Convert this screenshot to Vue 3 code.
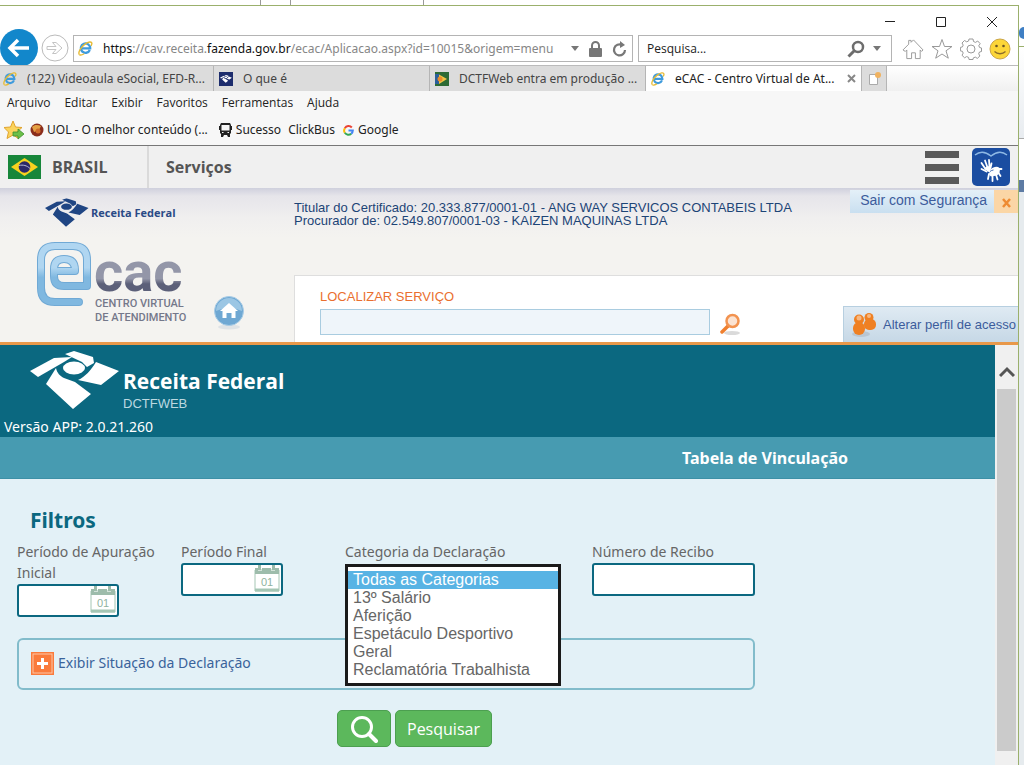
<script setup>
import { ref } from 'vue'

const search = ref('')
const service = ref('')
const start = ref('')
const end = ref('')
const receipt = ref('')
const category = ref(['Todas as Categorias'])

const tabs = [
  { title: '(122) Videoaula eSocial, EFD-R...', icon: 'ie' },
  { title: 'O que é', icon: 'rf' },
  { title: 'DCTFWeb entra em produção ...', icon: 'flag' },
  { title: 'eCAC - Centro Virtual de At...', icon: 'ie', active: true },
]
const menus = ['Arquivo', 'Editar', 'Exibir', 'Favoritos', 'Ferramentas', 'Ajuda']
const categories = [
  'Todas as Categorias',
  '13º Salário',
  'Aferição',
  'Espetáculo Desportivo',
  'Geral',
  'Reclamatória Trabalhista',
]
</script>

<template>
  <svg class="defs" aria-hidden="true">
    <symbol id="ie" viewBox="0 0 16 16">
      <path d="M12.6 9.6A5 5 0 1 1 13 7.8H4.2" fill="none" stroke="#3f9bdc" stroke-width="2.5" />
      <path d="M1.6 14.6C-.5 12.5 3 6.5 7.5 3.3 11 .8 14.5.3 14.8 2.3c.1 1-.4 2-.9 2.900" fill="none" stroke="#e6bb35" stroke-width="1.5" />
      <path d="M1.6 14.6c1.2.9 3.4 0 5-1" fill="none" stroke="#e6bb35" stroke-width="1.5" />
    </symbol>
    <symbol id="rfmark" viewBox="0 0 90 60">
      <path d="M0 20 24 7l18-1-8 5L8 26Z" />
      <path d="M35 3 44 0l19 6 1 6-7 4-5-5Z" />
      <ellipse cx="44" cy="17" rx="11" ry="6.5" />
      <path d="M26 17c1 5 4 8 8 10l11 4 16 12-18 15L16 33Z" />
      <path d="M48 29c7-3 13-10 18-18l23 9-18 14Z" />
    </symbol>
    <symbol id="rf" viewBox="0 0 14 14">
      <rect width="14" height="14" fill="#1d2d6d" />
      <svg x="1" y="3" width="12" height="8" viewBox="0 0 90 60" fill="#fff"><use href="#rfmark" /></svg>
    </symbol>
    <symbol id="flag" viewBox="0 0 14 14">
      <rect width="14" height="14" fill="#2d6b35" />
      <path d="M0 2h4l4 5-4 5H0z" fill="#2b5f9b" />
      <path d="M4 2.5 12 7l-8 5z" fill="#f2c544" />
      <circle cx="5" cy="7" r="2.5" fill="#e98c2d" />
    </symbol>
    <symbol id="lens" viewBox="0 0 18 18">
      <circle cx="11" cy="7" r="5" fill="none" stroke="#6d6d6d" stroke-width="2.5" />
      <path d="m7.500 10.500-6 6" stroke="#6d6d6d" stroke-width="3" />
    </symbol>
    <symbol id="cal" viewBox="0 0 26 27">
      <path d="M1 5h24v21H1z" fill="#fff" stroke="#a5c6b4" />
      <path d="M1 25h24" stroke="#a5c6b4" stroke-width="3" />
      <path d="M1 3h3v3h4V3h9v3h4V3h4v6H1z" fill="#9dbcab" />
      <path d="M5.500 0v5M19.500 0v5" stroke="#9dbcab" stroke-width="3" />
      <text x="13" y="21" text-anchor="middle" class="cal-day">01</text>
    </symbol>
  </svg>

  <div class="desktop">
    <div class="behind-top"><i class="t1"></i><i class="t2"></i><i class="t3"></i></div>
    <div class="stage">
      <main class="window">
        <div class="titlebar">
          <button aria-label="Minimizar"><svg width="12" height="12"><path d="M1 5.500h10" stroke="#222" /></svg></button>
          <button aria-label="Maximizar"><svg width="12" height="12"><path d="M1.500 1.500h9v9h-9z" fill="none" stroke="#222" /></svg></button>
          <button aria-label="Fechar"><svg width="12" height="12"><path d="m1 1 10 10M11 1 1 11" stroke="#222" /></svg></button>
        </div>

        <div class="navbar">
          <button class="back" aria-label="Voltar">
            <svg width="38" height="38" viewBox="0 0 38 38">
              <circle cx="19" cy="19" r="19" fill="#1287cb" />
              <path d="M29 19H10M18 11l-8 8 8 8" fill="none" stroke="#fff" stroke-width="3.500" />
            </svg>
          </button>
          <button class="forward" aria-label="Avançar">
            <svg width="28" height="28" viewBox="0 0 28 28">
              <circle cx="14" cy="14" r="13" fill="#fff" stroke="#bbb" />
              <path d="M6 12.500h9l-3.500-4h3.500l6 5.500-6 5.500h-3.500l3.500-4H6z" fill="none" stroke="#c4c4c4" />
            </svg>
          </button>
          <div class="address">
            <svg width="15" height="15"><use href="#ie" /></svg>
            <div class="url" role="textbox" contenteditable="true" aria-label="Endereço" spellcheck="false"><b>https</b>://cav.receita.<b>fazenda.gov.br</b>/ecac/Aplicacao.aspx?id=10015&amp;origem=menu</div>
            <svg width="8" height="5"><path d="M0 0h8L4 5z" fill="#777" /></svg>
            <svg width="13" height="16" viewBox="0 0 13 16"><path d="M3 8V4.500a3.500 3.500 0 0 1 7 0V8" fill="none" stroke="#777" stroke-width="2" /><rect y="7" width="13" height="9" rx="1" fill="#777" /></svg>
            <svg width="15" height="16" viewBox="0 0 15 16"><path d="M10 4A5.500 5.500 0 1 0 13 9" fill="none" stroke="#777" stroke-width="2.200" /><path d="M8 0v7l5-3z" fill="#777" /></svg>
          </div>
          <div class="search">
            <input v-model="search" type="text" placeholder="Pesquisa..." aria-label="Pesquisa" />
            <svg width="18" height="18"><use href="#lens" /></svg>
            <svg width="8" height="5"><path d="M0 0h8L4 5z" fill="#777" /></svg>
          </div>
          <div class="tools">
            <button aria-label="Página inicial"><svg width="22" height="22" viewBox="0 0 23 22"><path d="m1 12 6-6V2h2.500v2L12 1.500 22 12l-1.500 1.500-1.500-1.500v9h-5v-6h-4v6H5v-9l-1.500 1.500z" fill="#fff" stroke="#999" /></svg></button>
            <button aria-label="Favoritos"><svg width="22" height="22" viewBox="0 0 22 22"><path d="m11 1.500 2.500 7H21l-6 4.300 2.300 7.400L11 16l-6.300 4.200L7 12.800 1 8.500h7.500z" fill="#fff" stroke="#999" /></svg></button>
            <button aria-label="Configurações"><svg width="22" height="22" viewBox="0 0 22 22"><path d="M9 1h4l.5 2.500 2 .9L17.700 3l2.500 2.700-1.400 2 .8 1.800 1.900.5v3.500l-2 .5-.8 1.800 1.200 2.200-2.600 2.400-2-1.300-2 .8L13 21.500H9l-.4-2.100-2-.8-2 1.200L2 17.300l1.200-2.200-.8-1.800-2-.4V9.400l2-.5.8-1.800L2 5l2.500-2.500 2.200 1.300 1.900-.8z" fill="#fff" stroke="#999" /><circle cx="11" cy="11" r="4" fill="none" stroke="#999" /></svg></button>
            <button aria-label="Enviar comentário"><svg width="22" height="22" viewBox="0 0 22 22"><circle cx="11" cy="11" r="10" fill="#fcd638" stroke="#caa548" /><circle cx="7.500" cy="8" r="1.300" fill="#6b5525" /><circle cx="14.500" cy="8" r="1.300" fill="#6b5525" /><path d="M5.500 13.500c3 3 8 3 11 0" fill="none" stroke="#8b6c2a" stroke-width="1.300" /></svg></button>
          </div>
        </div>

        <nav class="tabs" aria-label="Guias">
          <div v-for="t in tabs" :key="t.title" class="tab" :class="{ active: t.active }">
            <svg width="14" height="14"><use :href="'#' + t.icon" /></svg>
            <button class="tab-title">{{ t.title }}</button>
            <button v-if="t.active" class="tab-close" aria-label="Fechar guia"><svg width="9" height="9"><path d="m1 1 7 7M8 1 1 8" stroke="#888" stroke-width="2" /></svg></button>
          </div>
          <button class="new-tab" aria-label="Nova guia"><svg width="13" height="14" viewBox="0 0 13 14"><path d="M1.500 2.500h8v10h-8z" fill="#fff" stroke="#aaa" /><circle cx="10" cy="3" r="3" fill="#f0b25f" /></svg></button>
        </nav>

        <nav class="menus" aria-label="Menu">
          <button v-for="m in menus" :key="m">{{ m }}</button>
        </nav>

        <nav class="favorites" aria-label="Barra de favoritos">
          <button class="add" aria-label="Adicionar a favoritos"><svg width="20" height="20" viewBox="0 0 20 20"><path d="m9 1 2.500 6 6.500.5-5 4.500 1.500 6.500L9 15l-6 3.500L4.500 12 0 7.500 6.500 7z" fill="#fbd45d" stroke="#e0a32f" /><path d="M9 12h5V9l6 5-6 5v-3H9z" fill="#6cc04a" stroke="#3d8f2e" stroke-width=".8" /></svg></button>
          <a class="uol" href="#uol"><svg width="14" height="14" viewBox="0 0 14 14"><circle cx="7" cy="7" r="6.500" fill="#8a2d1c" /><path d="M2 4c3-3 6-2 9-1l-2 4-5 2z" fill="#e3a043" /><circle cx="8" cy="8" r="2.500" fill="#cf6b2a" /></svg>UOL - O melhor conteúdo (...</a>
          <a class="bus" href="#sucesso"><svg width="13" height="14" viewBox="0 0 13 14"><path d="M2 0h9l1 2v8l-1 1v3H9l-1-2H5l-1 2H2v-3l-1-1V2zM0 3h1v4H0zM12 3h1v4h-1z" fill="#222" /><path d="M2.500 2h8v5.500h-8zM3 9h1.500v1H3zM8.500 9H10v1H8.500z" fill="#f7f7f7" /></svg>Sucesso</a>
          <a class="click" href="#clickbus">ClickBus</a>
          <a class="google" href="#google"><svg width="11" height="11" viewBox="0 0 12 12" fill="none" stroke-width="2.200"><path d="M9.600 2.700A4.700 4.700 0 0 0 2 3.500" stroke="#ea4335" /><path d="M2 3.500a4.700 4.700 0 0 0 0 5" stroke="#fbbc05" /><path d="M2 8.500a4.700 4.700 0 0 0 7 1" stroke="#34a853" /><path d="M9 9.500A4.700 4.700 0 0 0 10.700 6H6" stroke="#4285f4" /></svg>Google</a>
        </nav>

        <div class="govbar">
          <a class="brasil" href="#brasil">
            <svg width="33" height="24" viewBox="0 0 33 24"><rect width="33" height="24" fill="#17863a" /><path d="M16.500 3 30 12l-13.500 9L3 12z" fill="#f8d21f" /><circle cx="16.500" cy="12" r="5.800" fill="#2b2768" /><path d="M11 10.500c4-1 8 0 11 3" fill="none" stroke="#b9bbdc" /></svg>
            BRASIL
          </a>
          <a class="servicos" href="#servicos">Serviços</a>
          <button class="burger" aria-label="Menu"><svg width="34" height="33"><path d="M0 3.500h34M0 16.500h34M0 29.500h34" stroke="#5a5a5a" stroke-width="7" /></svg></button>
          <button class="libras" aria-label="Libras">
            <svg width="38" height="38" viewBox="0 0 38 38">
              <rect width="38" height="38" rx="5" fill="#1b4da1" />
              <path d="M3 7c5-4 11-3 16 1 5-4 11-5 16-1" fill="none" stroke="#8eb8e4" stroke-width="1.500" />
              <g stroke="#fff" stroke-linecap="round" fill="none">
                <path d="m9.500 15 4 6M13 12.500l2.500 7M17 12l.5 7M9.500 21l5 2.500M19.500 15.500 18.500 20" stroke-width="1.800" />
                <path d="m17 26-1 5M20.500 27v6M24 26.500l1.500 5M26 24l2.500 4M25 21l4.500 0" stroke-width="1.800" />
              </g>
              <path d="M13 19.500c2-1.500 4-1.500 6-1l-.5 3c3-3 7-3.500 9-1.500 1 3 0 6-2.500 7.500l-6 1c-2-1-2-3-1.500-4.500-2 0-4-2-4.500-4.500z" fill="#fff" />
              <path d="M18 23.500c1-.8 2-1.300 3.500-1.500" stroke="#1b4da1" stroke-width=".8" fill="none" />
            </svg>
          </button>
        </div>

        <header class="header">
          <div class="brands">
            <div class="rf-small">
              <svg width="44" height="30" viewBox="0 0 90 60" fill="#1f4583"><use href="#rfmark" /></svg>
              <span>Receita Federal</span>
            </div>
            <div class="ecac-row">
              <svg class="ecac" width="160" height="84" viewBox="0 0 160 84" role="img" aria-label="e-CAC Centro Virtual de Atendimento">
                <defs>
                  <linearGradient id="gb" gradientUnits="userSpaceOnUse" x1="0" y1="0" x2="0" y2="64"><stop offset=".4" stop-color="#b0d6f1" /><stop offset=".55" stop-color="#80b8e0" /></linearGradient>
                  <linearGradient id="gg" x1="0" y1="0" x2="0" y2="1"><stop offset=".6" stop-color="#9396a8" /><stop offset=".68" stop-color="#5c6079" /></linearGradient>
                </defs>
                <g fill="none" stroke-linejoin="round" stroke-linecap="round">
                  <path d="M42 60H18Q4 60 4 46V18Q4 4 18 4H36Q50 4 50 18V44H27Q17 44 17 34V27Q17 17 27 17Q38 17 38 28V29H21" stroke="#70a9d5" stroke-width="8" />
                  <path d="M42 60H18Q4 60 4 46V18Q4 4 18 4H36Q50 4 50 18V44H27Q17 44 17 34V27Q17 17 27 17Q38 17 38 28V29H21" stroke="url(#gb)" stroke-width="6" />
                </g>
                <text x="57" y="49" class="cac" fill="url(#gg)">cac</text>
                <text x="58" y="65" class="ecac-sub">CENTRO VIRTUAL</text>
                <text x="58" y="79" class="ecac-sub">DE ATENDIMENTO</text>
              </svg>
              <a class="home" href="#inicio" aria-label="Início">
                <svg width="30" height="34" viewBox="0 0 30 34"><ellipse cx="15" cy="31" rx="11" ry="2.500" fill="#dfe3e6" /><circle cx="15" cy="15" r="14.500" fill="#6fa8d3" stroke="#a8cce6" /><path d="M2 15a13 13 0 0 1 26 0q-13-6-26 0" fill="#9bc6e4" /><path d="m15 7 9 8h-2.500v7h-4v-5h-5v5h-4v-7H6z" fill="#fff" /></svg>
              </a>
            </div>
          </div>

          <div class="account">
            <div class="account-top">
              <p class="holder">Titular do Certificado: 20.333.877/0001-01 - ANG WAY SERVICOS CONTABEIS LTDA<br />Procurador de: 02.549.807/0001-03 - KAIZEN MAQUINAS LTDA</p>
              <a class="logout" href="#sair"><span>Sair com Segurança</span><svg width="24" height="23"><rect width="24" height="23" fill="#fbd6a6" /><path d="m9 9 7 8M16 9l-7 8" stroke="#ee8b32" stroke-width="2.500" /></svg></a>
            </div>
            <form class="finder" @submit.prevent>
              <div class="finder-field">
                <label for="service">LOCALIZAR SERVIÇO</label>
                <input id="service" v-model="service" type="text" />
              </div>
              <button class="find" aria-label="Localizar">
                <svg width="21" height="22" viewBox="0 0 21 22"><ellipse cx="12" cy="20" rx="8" ry="2" fill="#dadada" /><path d="m8 13-6 6" stroke="#ef7f2e" stroke-width="3.500" stroke-linecap="round" /><circle cx="12.500" cy="8" r="6" fill="#fbe3d2" stroke="#f29350" stroke-width="2.500" /></svg>
              </button>
              <a class="profile" href="#perfil">
                <svg width="26" height="24" viewBox="0 0 26 24"><ellipse cx="9" cy="21" rx="9" ry="3" fill="#b9c6d2" /><g fill="#ef8023"><circle cx="17" cy="4.500" r="4.500" /><rect x="12" y="6" width="12" height="11" rx="5" /><circle cx="7" cy="6.500" r="5" /><rect x="1" y="9" width="12" height="13" rx="6" /></g><circle cx="7" cy="5" r="2.500" fill="#f8b780" /><circle cx="17" cy="3" r="2" fill="#f8b780" /></svg>
                Alterar perfil de acesso
              </a>
            </form>
          </div>
        </header>

        <div class="frame">
          <section class="app">
            <header class="app-head">
              <div class="app-brand">
                <svg width="90" height="60" viewBox="0 0 90 60" fill="#fff"><use href="#rfmark" /></svg>
                <div><strong>Receita Federal</strong><span>DCTFWEB</span></div>
              </div>
              <p>Versão APP: 2.0.21.260</p>
            </header>
            <div class="band"><a href="#tabela">Tabela de Vinculação</a></div>
            <form class="filters" @submit.prevent>
              <h2>Filtros</h2>
              <div class="fields">
                <div class="field">
                  <label for="start">Período de Apuração Inicial</label>
                  <div class="date"><input id="start" v-model="start" type="text" /><svg width="26" height="27"><use href="#cal" /></svg></div>
                </div>
                <div class="field">
                  <label for="end">Período Final</label>
                  <div class="date"><input id="end" v-model="end" type="text" /><svg width="26" height="27"><use href="#cal" /></svg></div>
                </div>
                <div class="field">
                  <label for="category">Categoria da Declaração</label>
                  <div class="list">
                    <select id="category" v-model="category" multiple size="6">
                      <option v-for="c in categories" :key="c">{{ c }}</option>
                    </select>
                  </div>
                </div>
                <div class="field">
                  <label for="receipt">Número de Recibo</label>
                  <input id="receipt" v-model="receipt" class="receipt" type="text" />
                </div>
              </div>
              <div class="situation">
                <button type="button">
                  <svg width="23" height="23" viewBox="0 0 23 23"><rect width="23" height="23" fill="#fa7b3c" /><rect x="2" y="2" width="19" height="19" fill="none" stroke="#fdc7a6" /><path d="M11.500 6v11M6 11.500h11" stroke="#fff" stroke-width="3" /></svg>
                  Exibir Situação da Declaração
                </button>
              </div>
              <div class="actions">
                <button class="icon" aria-label="Pesquisar declarações"><svg width="28" height="28" viewBox="0 0 28 28"><circle cx="12" cy="12" r="9.500" fill="none" stroke="#fff" stroke-width="3" /><path d="m19 19 7 7" stroke="#fff" stroke-width="4" stroke-linecap="round" /></svg></button>
                <button>Pesquisar</button>
              </div>
            </form>
          </section>
          <div class="scroll">
            <button aria-label="Rolar para cima"><svg width="16" height="12"><path d="m1 10 7-7 7 7" fill="none" stroke="#555" stroke-width="3" /></svg></button>
            <div class="thumb"></div>
          </div>
        </div>
      </main>
      <aside class="behind" aria-hidden="true"><i class="b1"></i><i class="b2"></i><i class="b3"></i><i class="b4"></i></aside>
    </div>
  </div>
</template>

<style>
body { margin: 0; overflow: hidden; }
.cal-day { font: 11px "Liberation Sans", Arial, sans-serif; fill: #8fb3a0; }
</style>

<style scoped>
* { box-sizing: border-box; }
.defs { display: none; }
svg { flex: none; display: block; }
button { border: 0; padding: 0; background: none; font: inherit; color: inherit; cursor: pointer; }
a { color: inherit; text-decoration: none; }
p, h2 { margin: 0; }
input { border-radius: 0; outline: 0; padding: 0 6px; font: inherit; min-width: 0; }

.desktop { min-height: 100vh; display: flex; flex-direction: column; background: #fff; font: 12px/18px "Noto Sans", "Open Sans", sans-serif; color: #222; }
.behind-top { height: 5px; display: flex; }
.behind-top i { border-right: 1px solid #999; }
.t1 { width: 261px; }
.t2 { width: 30px; }
.t3 { width: 133px; }
.stage { flex: 1; display: flex; }
.window { flex: 1; min-width: 0; display: flex; flex-direction: column; border: solid #9bb06c; border-width: 1px 1px 0 0; overflow: hidden; }
.behind { width: 5px; display: flex; flex-direction: column; background: #fff; }
.b1 { height: 12px; margin-top: 22px; background: #3f7fc4; border-radius: 6px 0 0 6px; }
.b2 { height: 93px; margin-top: 7px; border-top: 1px solid #9bb06c; border-bottom: 1px solid #aaa; background: linear-gradient(#fff, #e8ecf0); }
.b3 { height: 12px; margin-top: 41px; background: #5d7ba4; }
.b4 { flex: 1; background: #e6ebee; }

.titlebar { height: 29px; display: flex; justify-content: flex-end; align-items: center; gap: 39px; padding: 2px 20px 0 0; }
.navbar { height: 30px; display: flex; align-items: flex-start; }
.back { margin-top: -6px; }
.forward { margin: -1px 4px 0 3px; }
.address, .search { height: 27px; display: flex; align-items: center; border: 1px solid #b4b4b4; background: #fff; }
.address { flex: 1; min-width: 0; padding: 0 5px 0 4px; gap: 10px; }
.url { flex: 1; min-width: 0; overflow: hidden; white-space: nowrap; color: #868686; outline: 0; }
.url b { font-weight: 400; color: #111; }
.search { width: 254px; margin-left: 5px; padding-right: 10px; gap: 8px; }
.search input { flex: 1; border: 0; background: none; padding: 0 8px; font-family: "Open Sans", sans-serif; }
.search input::placeholder { color: #222; opacity: 1; }
.tools { display: flex; gap: 7px; padding: 3px 7px 0 10px; }

.tabs { height: 26px; display: flex; margin-left: -2px; border-top: 1px solid #bbb; background: linear-gradient(#fff, #f0f0f0); }
.tab { width: 216px; display: flex; align-items: center; gap: 10px; padding: 0 1px 0 5px; background: #dcdcdc; border-right: 1px solid #b5b5b5; color: #444; }
.tab.active { background: #fff; color: #222; padding-right: 5px; }
.tab-title { flex: 1; min-width: 0; overflow: hidden; white-space: nowrap; text-align: left; }
.tab-close { margin-left: -8px; }
.new-tab { width: 25px; display: grid; place-items: center; background: #dcdcdc; border-right: 1px solid #b5b5b5; }

.menus { height: 24px; display: flex; align-items: center; gap: 14px; padding: 0 7px; background: #f7f7f7; font-family: "Open Sans", sans-serif; }
.favorites { height: 31px; display: flex; align-items: center; padding: 0 4px; background: #f7f7f7; border-bottom: 1px solid #777; white-space: nowrap; }
.favorites a { display: flex; align-items: center; gap: 4px; }
.favorites .uol { gap: 3px; }
.add { margin-right: 6px; }
.bus { margin-left: 11px; }
.click { margin-left: 7px; }
.google { margin-left: 8px; }

.govbar { height: 42px; display: flex; align-items: center; background: #f0f0f0; color: #555; font: 700 16px/20px "Open Sans", sans-serif; }
.brasil { width: 149px; height: 42px; display: flex; align-items: center; gap: 11px; padding-left: 8px; border-right: 2px solid #dadada; }
.servicos { flex: 1; padding-left: 17px; }
.libras { margin: 0 8px 0 13px; }

.header { height: 157px; display: flex; background: linear-gradient(#cfd0dd, #e6e5ea 8px, #f0efef 30px, #f4f3f0 50px); border-bottom: 3px solid #e8984a; font-family: "Liberation Sans", Arial, sans-serif; }
.brands { width: 294px; padding: 10px 0 0 37px; }
.rf-small { display: flex; align-items: center; gap: 2px; padding-left: 8px; color: #2a4a86; }
.rf-small span { font: 700 11px/16px "Open Sans", sans-serif; }
.ecac-row { display: flex; align-items: flex-end; gap: 17px; margin-top: 14px; }
.ecac-row .home { margin-bottom: -4px; }
.cac { font: 700 56px "Roboto", "Liberation Sans", sans-serif; }
.ecac-sub { font: 500 11px "Roboto", "Liberation Sans", sans-serif; fill: #74788a; }
.account { flex: 1; min-width: 0; display: flex; flex-direction: column; justify-content: space-between; }
.account-top { display: flex; justify-content: space-between; }
.holder { padding-top: 13px; font-size: 13px; line-height: 13px; color: #1c4476; white-space: nowrap; }
.logout { height: 23px; margin-top: 2px; display: flex; background: linear-gradient(#e4f0f8, #c9dff0); color: #3c5c9c; font-size: 14px; line-height: 20px; }
.logout span { padding: 0 7px 0 10px; }
.finder { height: 67px; display: flex; align-items: flex-end; background: #fff; border: solid #dedede; border-width: 1px 0 0 1px; padding-left: 25px; }
.finder-field { width: 390px; display: flex; flex-direction: column; gap: 3px; padding-bottom: 7px; color: #ea6f2f; font-size: 13px; }
.finder-field input { height: 26px; border: 1px solid #a9cce0; background: #eff5fa; }
.find { margin: 0 auto 7px 10px; }
.profile { height: 36px; display: flex; align-items: center; gap: 5px; padding: 0 2px 0 8px; border: solid #b7cfe0; border-width: 1px 0 0 1px; background: linear-gradient(#dfeaf3, #c6d8e6); color: #3c5c9c; font-size: 13px; white-space: nowrap; }

.frame { flex: 1; display: flex; background: #f7f7f7; }
.app { flex: 1; min-width: 0; background: #e3f1f7; }
.app-head { height: 92px; background: #0b6880; color: #fff; padding: 6px 4px 0; font-size: 14px; line-height: 20px; }
.app-brand { display: flex; gap: 3px; padding-left: 26px; height: 66px; }
.app-brand div { padding-top: 18px; }
.app-brand strong { display: block; font: 700 21px/24px "Open Sans", sans-serif; }
.app-brand span { display: block; font: 13px/22px "Liberation Sans", sans-serif; color: #bcd9e0; }
.band { height: 42px; display: flex; justify-content: flex-end; align-items: center; padding-right: 147px; background: #479bb1; border-bottom: 1px solid #3d90a6; color: #fff; font-size: 16px; font-weight: 700; }
.filters { max-width: 772px; padding: 28px 17px 18px; color: #666; }
.filters h2 { padding-left: 13px; color: #0b6880; font-size: 21px; line-height: 26px; }
.fields { display: grid; grid-template-columns: 164fr 164fr 247fr 163fr; padding-top: 8px; font-size: 14px; line-height: 21px; }
.field label { display: block; max-width: 144px; }
.field:nth-child(3) label { max-width: none; }
.field .date { width: 102px; height: 33px; display: flex; align-items: flex-start; padding-right: 1px; background: #fff; border: 2px solid #0b6880; border-radius: 3px; margin-top: 1px; }
.date input { flex: 1; border: 0; background: none; }
.receipt { width: 100%; height: 33px; margin-top: 1px; border: 2px solid #0b6880; border-radius: 3px; background: #fff; }
.list { position: relative; height: 34px; }
.list select { position: absolute; top: 2px; left: 0; z-index: 2; width: 216px; height: 122px; padding: 4px 0; border: 3px solid #1a1a1a; border-radius: 0; outline: 0; background: #fff; color: #666; font: 16px/18px "Liberation Sans", Arial, sans-serif; overflow: hidden; }
.list option { padding: 0 5px; min-height: 18px; line-height: 18px; }
.list option:checked { background: #58b3e4 linear-gradient(#58b3e4, #58b3e4); color: #fff; }
.situation { height: 52px; margin-top: 21px; display: flex; align-items: center; padding: 0 0 2px 12px; border: 2px solid #82bccb; border-radius: 6px; color: #3a639b; font-size: 14px; }
.situation button { display: flex; align-items: center; gap: 4px; }
.actions { display: flex; gap: 4px; margin-top: 20px; padding-left: 320px; }
.actions button { height: 37px; padding: 0 11px; background: #5cb85c; border: 1px solid #4c9f50; border-radius: 5px; color: #fff; font: 16px/24px "Open Sans", sans-serif; }
.actions .icon { width: 54px; padding: 0 12px; }
.scroll { width: 23px; display: flex; flex-direction: column; padding: 0 2px 14px; background: #f0f0f0; }
.scroll button { height: 44px; padding: 10px 0 0 2px; }
.thumb { flex: 1; background: #cbcbcb; }
</style>
